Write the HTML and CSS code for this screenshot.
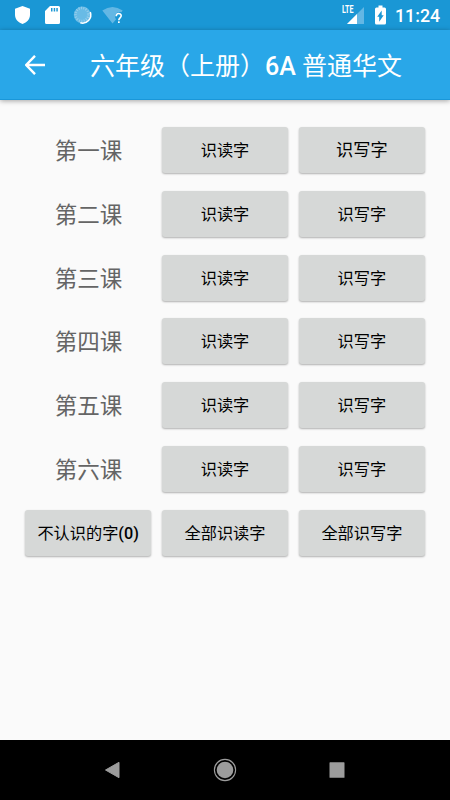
FILE: index.html
```html
<!DOCTYPE html>
<html lang="zh-CN">
<head>
<meta charset="utf-8">
<title>六年级（上册）6A 普通华文</title>
<link rel="stylesheet" href="styles.css">
</head>
<body>
<div class="status">
  <svg class="status-icons" width="130" height="30" viewBox="0 0 130 30">
    <path fill="#fff" d="M22.500 6l7.500 2.800v6c0 4.300-3 7.800-7.500 9.200-4.500-1.400-7.500-4.900-7.500-9.200v-6z"/>
    <path fill="#fff" fill-rule="evenodd" d="M50 6h8.500q1.500 0 1.500 1.500v15q0 1.500-1.500 1.500h-12q-1.500 0-1.500-1.500V11zM51 8v3.500h1.500V8zM53.700 8v3.500h1.500V8zM56.300 8v3.500h1.500V8z"/>
    <circle cx="82.300" cy="15" r="8.500" fill="#68bbe6"/>
    <circle cx="82" cy="14.500" r="6.500" fill="none" stroke="#96ceec" stroke-width="2.500" stroke-dasharray="1 1.400"/>
    <path d="M90.300 12a8.300 8.300 0 0 1-10 10.800" fill="none" stroke="#fff" stroke-width="1.500"/>
    <path fill="#63b7e4" d="M102.300 10.500Q112.500 3.500 122.700 10.500L121.500 12.200Q115 11.500 115 17l1 2.500-3.500 4z"/>
    <path d="M116.200 16.200c0-3.600 5-3.400 5-.4 0 2-2.400 2.200-2.400 4.400" fill="none" stroke="#fff" stroke-width="1.600"/>
    <rect x="118" y="21.300" width="1.700" height="1.700" fill="#fff"/>
  </svg>
  <div class="status-right">
    <span class="lte">LTE</span>
    <svg width="40" height="30" viewBox="346 0 40 30">
      <path fill="#63b7e4" d="M364 7v17h-17z"/>
      <path fill="#fff" d="M357 14v10h-10z"/>
      <path fill="#fff" d="M378.500 5.500h4V7.500h2q1.500 0 1.500 1.500v14q0 1.500-1.500 1.500h-8q-1.500 0-1.500-1.500V9q0-1.500 1.500-1.500h2z"/>
      <path fill="#1a97d5" d="M381.700 10.500v4.800h2l-4.500 6.500v-5h-2z"/>
    </svg>
    <span class="clock">11:24</span>
  </div>
</div>
<header class="bar">
  <svg class="back" width="20" height="20" viewBox="0 0 20 20"><path d="M20 10H1.800M10 .8L1.200 10 10 19.200" fill="none" stroke="#fff" stroke-width="2.400"/></svg>
  <h1>六年级（上册）<b>6A</b> 普通华文</h1>
</header>
<main class="grid">
  <div class="lesson">第一课</div><button>识读字</button><button class="large">识写字</button>
  <div class="lesson">第二课</div><button>识读字</button><button>识写字</button>
  <div class="lesson">第三课</div><button>识读字</button><button>识写字</button>
  <div class="lesson">第四课</div><button>识读字</button><button>识写字</button>
  <div class="lesson">第五课</div><button>识读字</button><button>识写字</button>
  <div class="lesson">第六课</div><button>识读字</button><button>识写字</button>
  <button>不认识的字<b>(0)</b></button><button>全部识读字</button><button>全部识写字</button>
</main>
<nav class="nav">
  <svg width="24" height="24" viewBox="0 0 24 24"><path fill="#9c9c9c" stroke="#9c9c9c" stroke-linejoin="round" d="M5.500 12L19 4.300v15.400z"/></svg>
  <svg width="24" height="24" viewBox="0 0 24 24"><circle cx="12" cy="12" r="8.300" fill="#9c9c9c"/><circle cx="12" cy="12" r="10.600" fill="none" stroke="#9c9c9c" stroke-width="1.100"/></svg>
  <svg width="24" height="24" viewBox="0 0 24 24"><rect x="4.500" y="4.300" width="15" height="15.500" rx=".6" fill="#9c9c9c"/></svg>
</nav>
</body>
</html>
```
FILE: styles.css
```css
* { box-sizing: border-box; }
body {
  margin: 0;
  height: 800px;
  display: flex;
  flex-direction: column;
  overflow: hidden;
  background: #fafafa;
  font-family: Roboto, "Noto Sans CJK SC", sans-serif;
}
svg { display: block; flex: none; }
b { font-weight: 500; }
.status {
  height: 30px;
  flex: none;
  display: flex;
  justify-content: space-between;
  background: #1a97d5;
  color: #fff;
}
.status-right { display: flex; width: 108px; }
.lte {
  width: 4px;
  flex: none;
  font-size: 10.500px;
  font-weight: 700;
  line-height: 12px;
  padding-top: 4px;
  transform: scaleX(.68);
  transform-origin: left;
}
.clock {
  margin-left: 9px;
  font-size: 17.800px;
  font-weight: 500;
  line-height: 31px;
}
.bar {
  height: 70px;
  flex: none;
  display: flex;
  align-items: center;
  padding-left: 25px;
  background: #29a7e8;
  border-bottom: 1px solid #1a97d9;
  color: #fff;
  box-shadow: 0 1px 5px rgba(0, 0, 0, .35);
}
h1 {
  margin: 4px 0 0 45px;
  font-size: 25px;
  font-weight: 400;
  line-height: 36px;
  white-space: nowrap;
}
.grid {
  flex: 1;
  display: grid;
  grid-template-columns: repeat(3, 126.600px);
  grid-auto-rows: 46px;
  gap: 17.850px 10.300px;
  align-content: start;
  justify-content: center;
  padding-top: 26.900px;
}
.lesson {
  font-size: 22.500px;
  line-height: 48px;
  text-align: center;
  color: #656565;
  padding-left: 1px;
}
button {
  border: 0;
  border-radius: 3px;
  padding: 1px 0 0;
  background: #d6d8d7;
  color: #000;
  font: 400 16.200px/45px Roboto, "Noto Sans CJK SC", sans-serif;
  white-space: nowrap;
  box-shadow: 0 1px 2px rgba(0, 0, 0, .3);
}
.large { font-size: 17.200px; }
.nav {
  height: 60px;
  flex: none;
  display: flex;
  align-items: center;
  justify-content: center;
  gap: 88.500px;
  padding-right: 1px;
  background: #000;
}
```
